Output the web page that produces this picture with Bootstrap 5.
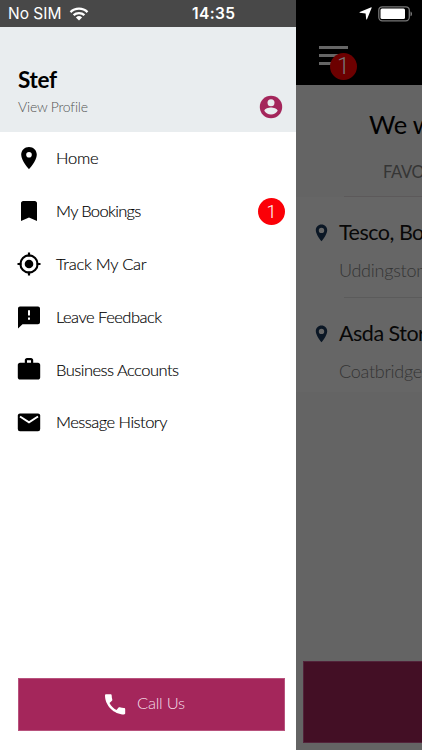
<!DOCTYPE html>
<html lang="en">
<head>
<meta charset="utf-8">
<meta name="viewport" content="width=device-width, initial-scale=1">
<title>Menu</title>
<link href="https://cdn.jsdelivr.net/npm/bootstrap@5.3.0/dist/css/bootstrap.min.css" rel="stylesheet">
<style>
body{font-family:Lato,"Open Sans",sans-serif;color:#111;background:#646464}
svg{display:block;flex:none}
.screen{width:422px;height:750px}
.drawer{width:296px}
.status{height:27px;background:#484848;font-family:Inter,"Liberation Sans",sans-serif;font-size:15.5px;line-height:27px}
.status .carrier{width:53px;letter-spacing:0}
.clock{font-weight:600;letter-spacing:.4px;margin-left:103px}
.profile{height:105px;background:#e9edef;padding:38px 13px 0 18px}
.user-name{font-weight:700;font-size:22.5px;line-height:30px;color:#000;letter-spacing:-.3px}
.view{font-weight:300;font-size:14px;line-height:24px;color:#555;letter-spacing:-.2px}
.menu-row{height:52.8px;padding:0 11px 0 17px}
.menu-row svg{width:24px;height:24px;margin-right:15px}
.label{font-weight:300;font-size:16.5px;line-height:24px;color:#000;letter-spacing:-.52px;-webkit-text-stroke:.15px #000}
.label-wide{letter-spacing:-.25px}
.label-tight{letter-spacing:-.65px}
.count{width:27px;height:27px;background:#fb0007;font:300 18px/27px Roboto,sans-serif}
.call{height:53px;margin:0 11px 19px 18px;background:#a4265b;border:1px solid #b8527d;border-radius:0;font-weight:300;font-size:16.5px;color:#f3dce6}
.call-text{letter-spacing:-.25px;margin:-2px 0 0 10px}
.page{width:126px;background:#646464}
.topbar{height:85px;background:#000}
.status-icons{height:27px;padding:0 9px 0 63px}
.burger{width:42px;height:38px;margin:14px 0 0 22px}
.burger-count{left:12px;top:12px;width:27px;height:27px;background:#6c0000;color:#777;font:300 23px/27px Roboto,sans-serif}
.heading{height:75px;padding:22px 0 0 73px}
.title-text{font-size:25.5px;line-height:34px;color:#000;letter-spacing:-.2px}
.tabs-head{height:36px;padding-left:87px;line-height:24px}
.tab-text{font-size:16.5px;color:#353535;letter-spacing:-.3px}
.places{background:#666;height:195px}
.place{height:101px;padding:22px 0 0 19px}
.place-name{font-size:21.5px;line-height:30px;color:#080808;margin-left:11px;letter-spacing:-.5px;margin-top:-2px}
.place-town{font-weight:300;font-size:18px;line-height:28px;margin:9px 0 0 24px;color:#343434;letter-spacing:-.25px}
.rule{height:1px;background:#5c595a;margin-left:48px}
.places .rule{margin-top:-1px;background:#5b5b5b}
.big-action{height:82px;margin:0 0 7px 7px;background:#430f25;border:1px solid #52233a;border-right:0}
</style>
</head>
<body>
<div class="screen d-flex overflow-hidden">
  <aside class="drawer d-flex flex-column bg-white flex-shrink-0">
    <div class="status d-flex align-items-center text-white flex-shrink-0">
      <span class="carrier text-nowrap ms-2">No SIM</span>
      <svg class="ms-2" width="20" height="14" viewBox="0 0 20 14" fill="none" stroke="#fff" stroke-width="2.3"><path d="M1.5 5.1a12.2 12.2 0 0 1 17 0M4.6 8.2a7.8 7.8 0 0 1 10.8 0"/><path d="M10 13.6 6.9 10.500a4.500 4.500 0 0 1 6.200 0z" fill="#fff" stroke="none"/></svg>
      <span class="clock">14:35</span>
    </div>
    <header class="profile flex-shrink-0">
      <div class="user-name">Stef</div>
      <div class="d-flex align-items-center justify-content-between">
        <span class="view">View Profile</span>
        <svg width="24" height="24" viewBox="0 0 24 24" fill="#a4265b"><circle cx="12" cy="12" r="11.200"/><circle cx="12" cy="7.700" r="3.500" fill="#e9edef"/><path fill="#e9edef" d="M5.300 15.700c.5-2.300 4.400-3.300 6.700-3.300s6.200 1 6.700 3.300c-1.300 2.200-3.800 3.700-6.700 3.700s-5.400-1.500-6.700-3.700z"/></svg>
      </div>
    </header>
    <nav class="flex-grow-1">
      <div class="menu-row d-flex align-items-center"><svg viewBox="0 0 24 24"><path d="M12 1C7.600 1 4.200 4.400 4.200 8.700 4.200 14.500 12 23.200 12 23.200s7.800-8.700 7.800-14.500C19.800 4.400 16.400 1 12 1zm0 10.500a2.800 2.800 0 1 1 0-5.600 2.800 2.800 0 0 1 0 5.600z"/></svg><span class="label label-wide">Home</span></div>
      <div class="menu-row d-flex align-items-center"><svg viewBox="0 0 24 24"><path d="M6.200 2h11.600c1.200 0 2.200 1 2.200 2.200V22l-8-3.500L4 22V4.200C4 3 5 2 6.200 2z"/></svg><span class="label label-tight">My Bookings</span><span class="count rounded-circle text-white text-center ms-auto">1</span></div>
      <div class="menu-row d-flex align-items-center"><svg viewBox="0 0 24 24"><circle cx="12" cy="12" r="4.300"/><circle cx="12" cy="12" r="8.600" fill="none" stroke="#000" stroke-width="2.100"/><path d="M12 .5v4M12 19.500v4M.5 12h4M19.500 12h4" stroke="#000" stroke-width="2.200"/></svg><span class="label label-wide">Track My Car</span></div>
      <div class="menu-row d-flex align-items-center"><svg viewBox="0 0 24 24"><path fill-rule="evenodd" d="M3 1.500h18c1.100 0 2 .9 2 2v13.700c0 1.100-.9 2-2 2H5.500L1 23.500v-20c0-1.100.9-2 2-2zM11 5.200v5.300h2V5.200zm0 7.300v2.200h2v-2.200z"/></svg><span class="label">Leave Feedback</span></div>
      <div class="menu-row d-flex align-items-center"><svg viewBox="0 0 24 24"><path fill-rule="evenodd" d="M10 0h4c1.200 0 2.200 1 2.200 2.200v2.500H21c1.200 0 2.200 1 2.200 2.200v12.500c0 1.200-1 2.200-2.200 2.200H3c-1.200 0-2.200-1-2.200-2.200V6.900c0-1.200 1-2.200 2.200-2.200h4.800V2.200C7.800 1 8.800 0 10 0zm0 2.200v2.500h4V2.200z"/></svg><span class="label">Business Accounts</span></div>
      <div class="menu-row d-flex align-items-center"><svg viewBox="0 0 24 24"><rect x=".8" y="3.400" width="22.400" height="17.800" rx="2.200"/><path d="m3 6.500 9 5.800 9-5.800" fill="none" stroke="#fff" stroke-width="2"/></svg><span class="label">Message History</span></div>
    </nav>
    <button type="button" class="call btn p-0 d-flex align-items-center flex-shrink-0">
      <svg width="108" height="24" viewBox="0 0 108 24" fill="#fff"><g transform="translate(1.500 -1)"><path d="M89 11c1.600 3.200 3.900 5.300 7 7l2.100-2.400c.3-.4.800-.5 1.300-.3 1.300.4 2.800.6 4.100.6.700 0 1.200.5 1.200 1.100v4.300c0 .7-.5 1.200-1.200 1.200C93.500 22.500 84.500 13.500 84.500 3.500c0-.7.5-1.200 1.200-1.200H90c.7 0 1.200.5 1.200 1.200 0 1.400.2 2.700.6 4 .1.500 0 1-.3 1.300z"/></g></svg>
      <span class="call-text">Call Us</span>
    </button>
  </aside>
  <main class="page d-flex flex-column flex-shrink-0 overflow-hidden text-nowrap">
    <div class="topbar flex-shrink-0">
      <div class="status-icons d-flex align-items-center justify-content-between">
        <svg width="13" height="13" viewBox="0 0 13 13" fill="#fff"><path d="M12.300.3q.5 0 .4.500L8 12.200q-.5.700-.8 0L6.600 6.400.8 5.800q-.7-.3 0-.8z"/></svg>
        <svg width="36" height="16" viewBox="0 0 36 16"><rect x="1.800" y=".8" width="30.500" height="14" rx="3.500" fill="none" stroke="#777" stroke-width="1.300"/><rect x="3.500" y="2.500" width="24.500" height="10.600" rx="1.500" fill="#fff"/><path d="M33.500 5.500c2 .6 2 4.200 0 4.800z" fill="#777"/></svg>
      </div>
      <div class="burger position-relative">
        <svg width="42" height="30" viewBox="0 0 42 30"><path d="M1 6.500h29M1 14.500h29M1 22.500h29" stroke="#666" stroke-width="2.800"/></svg>
        <span class="burger-count position-absolute rounded-circle text-center">1</span>
      </div>
    </div>
    <div class="heading flex-shrink-0"><div class="title-text">We w</div></div>
    <div class="tabs-head flex-shrink-0"><span class="tab-text">FAVO</span></div>
    <div class="rule flex-shrink-0"></div>
    <div class="places flex-shrink-0">
      <div class="place"><div class="d-flex align-items-center"><svg width="13" height="18" viewBox="0 0 13 18"><path fill="#0b1725" fill-rule="evenodd" d="M6.500.5C3.200.5.800 3 .8 6.200c0 4.500 5.700 11 5.700 11s5.700-6.500 5.700-11C12.200 3 9.800.5 6.500.500zm0 3.200a2.700 2.700 0 1 1 0 5.400 2.700 2.700 0 0 1 0-5.400z"/></svg><span class="place-name">Tesco, Bo</span></div><div class="place-town">Uddingston</div></div>
      <div class="rule"></div>
      <div class="place"><div class="d-flex align-items-center"><svg width="13" height="18" viewBox="0 0 13 18"><path fill="#0b1725" fill-rule="evenodd" d="M6.500.5C3.200.5.800 3 .8 6.200c0 4.500 5.700 11 5.700 11s5.700-6.500 5.700-11C12.200 3 9.800.5 6.500.500zm0 3.200a2.700 2.700 0 1 1 0 5.400 2.700 2.700 0 0 1 0-5.400z"/></svg><span class="place-name">Asda Stor</span></div><div class="place-town">Coatbridge</div></div>
    </div>
    <div class="big-action mt-auto flex-shrink-0"></div>
  </main>
</div>
<script src="https://cdn.jsdelivr.net/npm/bootstrap@5.3.0/dist/js/bootstrap.bundle.min.js"></script>
</body>
</html>
